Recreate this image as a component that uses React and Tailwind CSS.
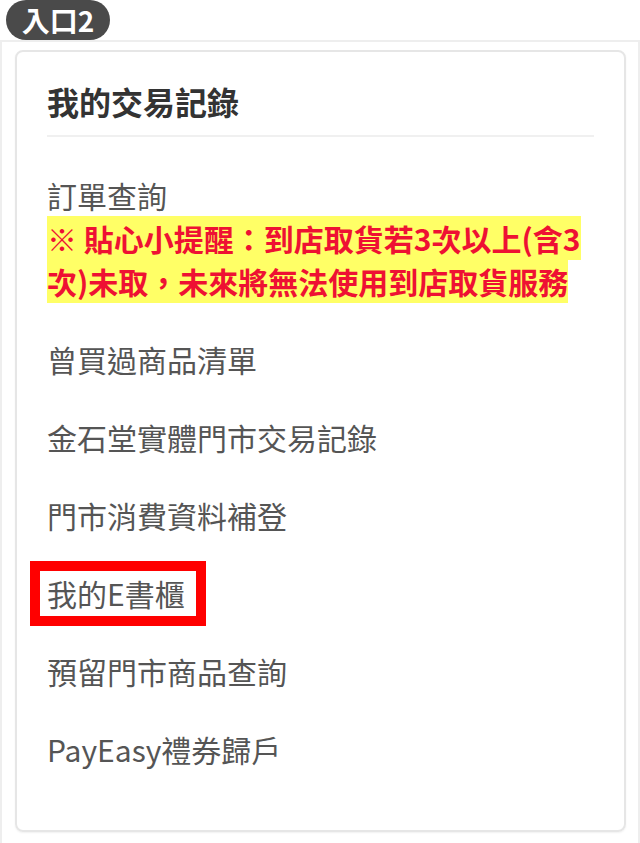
import React from "react";

const items = [
  "曾買過商品清單",
  "金石堂實體門市交易記錄",
  "門市消費資料補登",
  "我的E書櫃",
  "預留門市商品查詢",
  "PayEasy禮券歸戶",
];

export default function App() {
  return (
    <div
      className="w-[640px] h-[843px] bg-white overflow-hidden"
      style={{ fontFamily: '"Noto Sans CJK TC", "Noto Sans", sans-serif' }}
    >
      <div className="h-[40px] pl-[6px]">
        <div className="inline-flex h-[40px] w-[104px] items-center justify-center rounded-full bg-[#4a4a4a] text-[28px] font-bold leading-none text-white">
          入口2
        </div>
      </div>
      <div className="h-[803px] border-x-2 border-t-2 border-[#eeeeee] pl-[13px] pr-[12px] pt-[8px]">
        <div className="h-[782px] rounded-[8px] border-2 border-[#e6e6e6] px-[30px] pt-[28px] shadow-[0_1px_2px_rgba(0,0,0,0.06)]">
          <div className="border-b-2 border-[#f0f0f0] pb-[12px] text-[32px] font-bold leading-[43px] text-[#333333]">
            我的交易記錄
          </div>
          <div className="flex flex-col gap-[35px] pt-[37px] text-[30px] leading-[43px] text-[#555555]">
            <div>
              <div>訂單查詢</div>
              <div className="font-bold text-[#ee1133]">
                <span className="bg-[#ffff66]">
                  ※ 貼心小提醒：到店取貨若3次以上(含3次)未取，未來將無法使用到店取貨服務
                </span>
              </div>
            </div>
            {items.map((t) => (
              <div key={t} className="relative">
                {t}
                {t === "我的E書櫃" && (
                  <div className="absolute left-[-17px] top-[-11px] h-[65px] w-[176px] border-[10px] border-[#ff0000]" />
                )}
              </div>
            ))}
          </div>
        </div>
      </div>
    </div>
  );
}
